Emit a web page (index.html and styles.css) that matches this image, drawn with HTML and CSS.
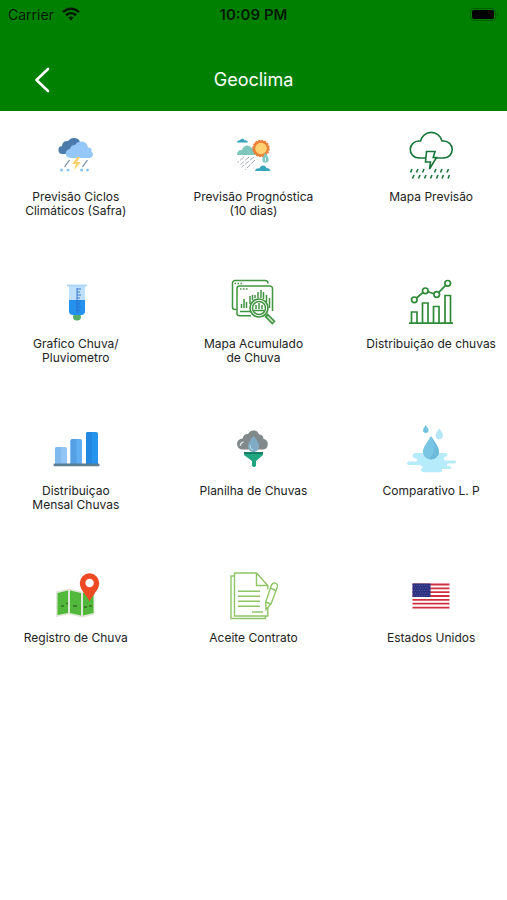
FILE: index.html
```html
<!DOCTYPE html>
<html lang="pt-BR">
<head>
    <meta charset="UTF-8">
    <meta name="viewport" content="width=device-width, initial-scale=1.0">
    <title>Geoclima</title>
    <link rel="stylesheet" href="styles.css">
</head>
<body>
    <header>
        <div class="status">
            <span class="carrier">Carrier
                <svg width="18" height="14" viewBox="0 0 18 14" fill="none" stroke="#001a00" stroke-width="2.6">
                    <path d="M1 5.2C5.5 .6 12.500 .6 17 5.200M4 8.300c2.900-2.800 7.100-2.800 10 0"/>
                    <path d="M6.200 10.500c1.700-1.500 3.900-1.500 5.600 0L9 13.400z" fill="#001a00" stroke="none"/>
                </svg>
            </span>
            <span class="time">10:09 PM</span>
            <span class="battery">
                <svg width="29" height="13" viewBox="0 0 29 13">
                    <rect x=".5" y=".5" width="25" height="12" rx="3.500" fill="none" stroke="#005c00"/>
                    <rect x="2" y="2" width="22" height="9" rx="2" fill="#000"/>
                    <path d="M27 4.500q2 2 0 4z" fill="#005c00"/>
                </svg>
            </span>
        </div>
        <nav>
            <button type="button" class="back" aria-label="Voltar">
                <svg width="16" height="26" viewBox="0 0 16 26" fill="none" stroke="#fff" stroke-width="2.6" stroke-linecap="round" stroke-linejoin="round">
                    <path d="M14 2 2.500 13 14 24"/>
                </svg>
            </button>
            <h1>Geoclima</h1>
        </nav>
    </header>

    <main class="menu">
        <a href="#" class="item">
            <svg class="icon" viewBox="0 0 50 50">
                <path d="M12 24a4 4 0 0 1-1-8 5 5 0 0 1 6-5 7 7 0 0 1 12.500 2L24 24z" fill="#4b7bab"/>
                <path d="M19.500 28a4.500 4.500 0 0 1-.5-9 4.500 4.500 0 0 1 5-4 7 7 0 0 1 13 2.500c3 0 4 2 3.500 4A3.600 3.600 0 0 1 39 28z" fill="#95c8f8"/>
                <path d="M18.500 30 13.500 37M36.500 30l-5 7" stroke="#6d86a5" stroke-width="1.200"/>
                <path d="M26.500 27 21 34h4l-2 6 7-8h-4l3-5z" fill="#ffd06b"/>
                <g fill="#8cc8f5"><circle cx="10.500" cy="40" r="1.500"/><circle cx="17" cy="40" r="1.500"/><circle cx="30.500" cy="40" r="1.500"/><circle cx="36.500" cy="40" r="1.500"/></g>
            </svg>
            <span>Previsão Ciclos<br>Climáticos (Safra)</span>
        </a>
        <a href="#" class="item">
            <svg class="icon" viewBox="0 0 50 50">
                <path d="M9 12.500c.5-2 2-2.500 3-2 1-2.500 4-2 4.500 0 1.500-.5 3 .5 3.500 2z" fill="#38a0ba"/>
                <path d="M9 25c0-4 2.500-5.500 5-5 1-5 7-6 9-2.500 2 0 4 2 4.500 7.500z" fill="#7fc7bd"/>
                <circle cx="33" cy="18.500" r="8" fill="#e98036"/>
                <circle cx="33" cy="18.500" r="8" fill="none" stroke="#e98036" stroke-width="1.600" stroke-dasharray="2 1.140"/>
                <circle cx="33" cy="18.500" r="5.800" fill="#ffd173"/>
                <path d="M37.500 23c2 3 3.200 4.500 3.200 6.500a3.200 3.200 0 0 1-6.400 0c0-2 1.200-3.500 3.200-6.500z" fill="#80c9c2"/>
                <path d="M37.500 27.500v4" stroke="#d9f0ec"/>
                <path d="m16 27-6.500 5.500M21 27l-9 8M26 27 13.500 37M27 30 17 40" stroke="#a4adba" stroke-dasharray="5 1.500" fill="none"/>
                <path d="M27 41c.5-2.500 3-3 4.500-2.500 1-4 6-4 7-.5 2 0 3.500 1 4 3z" fill="#38a5bc"/>
            </svg>
            <span>Previsão Prognóstica<br>(10 dias)</span>
        </a>
        <a href="#" class="item">
            <svg class="icon" viewBox="0 0 50 50" fill="none" stroke="#17753a" stroke-width="1.600">
                <path d="M20 28h-7.500a8.500 8.500 0 0 1 .5-17h1.500a11 11 0 0 1 21.500 0h1.500a8.500 8.500 0 0 1 .5 17H29"/>
                <path d="M20.500 21.500h8.500l-1.800 6H30.500L23.500 39l1-7h-5z"/>
                <path d="m6 39-1.500 3.500M12 39l-1.500 3.500M18 39l-1.500 3.500M30 39l-1.500 3.500M36 39l-1.500 3.500M42.500 39 41 42.500M8 45l-1.500 3.500M14 45l-1.500 3.500M20 45l-1.500 3.500M26 45l-1.500 3.500M32 45l-1.500 3.500M37.500 45 36 48.500M43.500 45 42 48.500"/>
            </svg>
            <span>Mapa Previsão</span>
        </a>
        <a href="#" class="item">
            <svg class="icon" viewBox="0 0 50 50">
                <ellipse cx="26" cy="40" rx="4" ry="3.500" fill="#56ad67"/>
                <path d="M18 9h16v25q0 4-4 4h-8q-4 0-4-4z" fill="#bfe0fc"/>
                <path d="M18 23h16v11q0 4-4 4h-8q-4 0-4-4z" fill="#2591ee"/>
                <path d="M16 8.500h20" stroke="#a9d4f7" stroke-width="1.800"/>
                <path d="M26 11v25M26 12h4M26 15h3M26 18h4M26 21h3M26 24h4M26 27h3M26 30h4M26 33h3" stroke="#2b70c8" fill="none" stroke-width=".9"/>
            </svg>
            <span>Grafico Chuva/<br>Pluviometro</span>
        </a>
        <a href="#" class="item">
            <svg class="icon" viewBox="0 0 50 50" fill="none" stroke="#419541" stroke-width="1.500">
                <path d="M8.500 32.500H7a2.500 2.500 0 0 1-2.500-2.500V6A2.500 2.500 0 0 1 7 3.500h30a3 3 0 0 1 3 3"/>
                <path d="M23 38.800H11.500A2.500 2.500 0 0 1 9 36.300V11.500A2.500 2.500 0 0 1 11.500 9H42a2.500 2.500 0 0 1 2.500 2.500V34"/>
                <path d="M6.500 6.500H14M12 12h8" stroke-dasharray="1.500 1.500"/>
                <path d="M12 34.500h10"/>
                <path d="M13.500 31v-4M16 31v-9M18.500 31v-6M22 27v-8M24.500 23v-5M27 21v-3M30 21v-6M33 21v-8M35.500 22v-7M38.500 25v-7M41.500 31v-10"/>
                <circle cx="31" cy="31" r="9" stroke-width="1.700"/>
                <circle cx="31" cy="31" r="6.500"/>
                <path d="M26 33.500h10M28 32v-4M31 32v-6M34 32v-4"/>
                <path d="m38 38 8 8" stroke-width="4.600"/>
                <path d="m39.500 39.500 5.500 5.500" stroke="#d9edd9" stroke-width="1.400"/>
            </svg>
            <span>Mapa Acumulado<br>de Chuva</span>
        </a>
        <a href="#" class="item">
            <svg class="icon" viewBox="0 0 50 50" fill="none" stroke="#2f8a38" stroke-width="1.700">
                <path d="m10.500 21 6.500-5.500M22 14.800l6 1.900M32.800 15.300l6.800-6.900"/>
                <circle cx="8.300" cy="22.800" r="2.800"/>
                <circle cx="19.300" cy="13.800" r="2.800"/>
                <circle cx="30.700" cy="17.500" r="2.800"/>
                <circle cx="41.700" cy="6.300" r="2.800"/>
                <path d="M5.500 46V35H11v11M16.500 46V26H22v20M27.500 46V29.500H33V46M39 46V18.500h5.500V46M3 46.200h44"/>
            </svg>
            <span>Distribuição de chuvas</span>
        </a>
        <a href="#" class="item">
            <svg class="icon" viewBox="0 0 50 50">
                <path d="M4 40V25q0-2 2-2h8q2 0 2 2v15z" fill="#90c5f6"/>
                <path d="M4 40V25q0-2 2-2h4v17z" fill="#80b9ee"/>
                <path d="M19.500 40V17q0-2 2-2H29q2 0 2 2v23z" fill="#62aef3"/>
                <path d="M19.500 40V17q0-2 2-2h4v25z" fill="#559fe5"/>
                <path d="M35 40V10q0-2 2-2h8q2 0 2 2v30z" fill="#2394f0"/>
                <path d="M35 40V10q0-2 2-2h4v32z" fill="#2388df"/>
                <rect x="2.500" y="39.500" width="46" height="2.800" rx="1" fill="#5d7d92"/>
            </svg>
            <span>Distribuiçao<br>Mensal Chuvas</span>
        </a>
        <a href="#" class="item">
            <svg class="icon" viewBox="0 0 50 50">
                <path d="M14.500 25.500a5.500 5.500 0 0 1 0-11c1-4 3.500-5 5.500-4.500 3-5 9.500-4.500 11 .5 3 0 4.500 2 4.500 4.500a5.300 5.300 0 0 1-1 10.500z" fill="#81898a"/>
                <path d="M12.500 22q-.5-3 3-4" stroke="#d8dddd" stroke-width="1.400" fill="none"/>
                <path d="M25.500 12c3.500 4 5.500 7 5.500 10.500a5.500 5.500 0 0 1-11 0c0-3.500 2-6.500 5.500-10.500z" fill="#80adc5"/>
                <path d="M22 21q-.5 4 3 5" stroke="#c0dce7" fill="none"/>
                <path d="M16 28h19v3l-7 6v5q-2 2-4 0V37l-8-6z" fill="#20a581"/>
                <path d="M16 28h19v2H16z" fill="#157e65"/>
            </svg>
            <span>Planilha de Chuvas</span>
        </a>
        <a href="#" class="item">
            <svg class="icon" viewBox="0 0 50 50">
                <path d="M11 29H39q2.500 0 2.500 1.800T39 33h-1q-1 2 1 3.500h9q2 0 2 1.500t-2 1.500h-6q-2 1-1 2.500h2.500q1.500 0 1.500 1.800T43 45h-7v1.500q0 1.800-2 1.800H18q-3-.3-3-2.300 0-2 2-2.500-1-2-3-2.500H3q-2 0-2-1.800T3 37.500h6.500q2.500-.5 2-2L8.500 34q-2-.5-2-2.300T9 29z" fill="#b6ebfc"/>
                <path d="M25 12c5 8 8 11.500 8 16a8 7.500 0 0 1-16 0c0-4.500 3-8 8-16z" fill="#78c6e4"/>
                <path d="M25 12c4 9 5 17-2 23a8 7.500 0 0 0 10-7c0-4.500-3-8-8-16z" fill="#6dbbdb"/>
                <path d="M19.800 1c2 3 2.700 4 2.700 5.200a2.700 2.700 0 0 1-5.400 0C17.100 5 17.800 4 19.800 1z" fill="#70c3e2"/>
                <path d="M33.300 4.500c2.500 3.500 3.700 5 3.700 7a3.700 3.700 0 0 1-7.400 0c0-2 1.200-3.500 3.700-7z" fill="#b4e6f8"/>
            </svg>
            <span>Comparativo L. P</span>
        </a>
        <a href="#" class="item">
            <svg class="icon" viewBox="0 0 50 50">
                <path d="m5 20.500 13-3 13 3 12.500-3v26L31 46.500l-13-3.300L5 46z" fill="#dfe8d8"/>
                <path d="M6.500 22 17 19.500V42L6.500 44zM19 19.500 30 22v22.500L19 42zM32 22l10.500-3v23L32 44.500z" fill="#52b83b"/>
                <path d="M10 35h3M15 32.500h2M22 35h4M33 36h3M38 35h3" stroke="#34702a" stroke-width="1.500" fill="none"/>
                <path d="M38.500 30.500C35 23 28.800 19 28.800 12a9.700 9.700 0 0 1 19.400 0c0 7-6.200 11-9.700 18.500z" fill="#ee4a24"/>
                <circle cx="38.600" cy="12" r="4.200" fill="#fff"/>
            </svg>
            <span>Registro de Chuva</span>
        </a>
        <a href="#" class="item">
            <svg class="icon" viewBox="0 0 50 50" fill="none" stroke="#8fc565" stroke-width="1.400">
                <path d="M6 5H3v42.500h34.500V45"/>
                <path d="M39.800 37V45H6.500V2h22l11.300 12.500v4M28.500 2v12.500h11.300"/>
                <path d="M10 20.200h22M10 25.200h22M10 30.200h22M10 35.200h22M24 41h11"/>
                <path d="M43.500 14q2-3 4.500-1.500t1 4.500L43 33l-5 5.500-.3-7.500zM42.500 17l5 2.500M37.800 31l4.700 2"/>
            </svg>
            <span>Aceite Contrato</span>
        </a>
        <a href="#" class="item">
            <svg class="icon" viewBox="0 0 50 50">
                <path d="M6.500 12.500h37v25h-37z" fill="#fff"/>
                <path d="M6.500 13.500h37M6.500 17.300h37M6.500 21.200h37M6.500 25h37M6.500 28.900h37M6.500 32.700h37M6.500 36.600h37" stroke="#cf3341" stroke-width="1.800"/>
                <path d="M6.500 12.500h18V26h-18z" fill="#2c3080"/>
                <path d="M8 14.500h15.500M9 17h14M8 19.500h15.500M9 22h14M8 24.500h15.500" stroke="#6567a5" stroke-width=".8" stroke-dasharray="1 1.500"/>
            </svg>
            <span>Estados Unidos</span>
        </a>
    </main>
</body>
</html>
```
FILE: styles.css
```css
*{
    box-sizing: border-box;
}

body{
    margin: 0;
    background-color: #fff;
    font-family: Inter, "Liberation Sans", sans-serif;
}

header{
    background-color: #008000;
    padding-bottom: 12px;
}

.status{
    display: grid;
    grid-template-columns: 1fr auto 1fr;
    align-items: center;
    height: 28px;
    padding: 0 8px;
    font-size: 14px;
    color: #001a00;
}

.carrier{
    display: flex;
    align-items: center;
    gap: 8px;
}

.time{
    font-size: 15px;
    font-weight: 600;
}

.battery{
    display: flex;
    justify-content: flex-end;
}

nav{
    display: grid;
    grid-template-columns: 84px 1fr 84px;
    align-items: center;
    height: 71px;
    padding-top: 33px;
}

.back{
    display: flex;
    justify-content: center;
    padding: 0;
    border: none;
    background: none;
    cursor: pointer;
}

h1{
    margin: 0;
    font-size: 18px;
    font-weight: 400;
    line-height: 24px;
    text-align: center;
    color: #fff;
}

.menu{
    display: grid;
    grid-template-columns: repeat(3, 1fr);
    grid-auto-rows: 147px;
    column-gap: 26px;
    padding-top: 19px;
}

.item{
    display: flex;
    flex-direction: column;
    align-items: center;
    gap: 10px;
    font-size: 12px;
    line-height: 14px;
    text-align: center;
    white-space: nowrap;
    color: #222;
    text-decoration: none;
}

.icon{
    width: 50px;
    height: 50px;
}
```
